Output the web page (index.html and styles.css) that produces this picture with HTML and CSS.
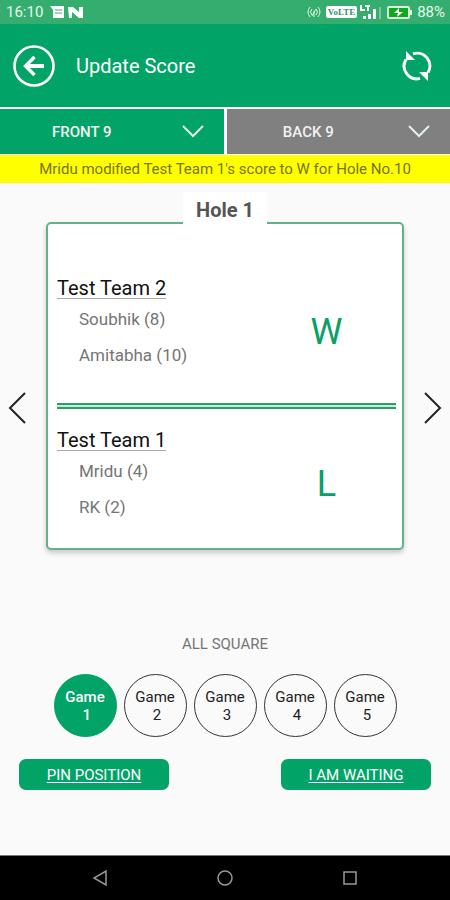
FILE: index.html
```html
<!DOCTYPE html>
<html lang="en">
<head>
<meta charset="utf-8">
<meta name="viewport" content="width=device-width, initial-scale=1">
<title>Update Score</title>
<link rel="stylesheet" href="styles.css">
</head>
<body>
<div class="status-bar">
  <span class="clock">16:10</span>
  <svg class="status-left" width="34" height="14" viewBox="0 0 34 14" aria-hidden="true">
    <path d="M0 1h14v12H3V5z" fill="#fff"/>
    <path d="M5 5h7M5 8h7" stroke="#35ad6f" stroke-width="1"/>
    <path d="M18 2h5l6 5V2h4v11h-4l-7-6v6h-3z" fill="#fff"/>
  </svg>
  <span class="spacer"></span>
  <svg width="14" height="12" viewBox="0 0 14 12" fill="none" stroke="#e0f5e8" aria-hidden="true">
    <path d="M3 1Q-1 6 3 11M5 3Q2 6 5 9M11 1q4 5 0 10M9 3q3 3 0 6"/>
    <path d="M7 5v6M5 10l4-7"/>
  </svg>
  <span class="volte">VoLTE</span>
  <svg width="22" height="15" viewBox="0 0 22 15" fill="#fff" aria-hidden="true">
    <path d="M0 0h2v4h3v2H0zM5 0h5v2H9v4H7V2H5zM3 11h3v3H3zM8 9h3v5H8zM13 4h3v10h-3z"/>
    <path d="M19 2h2v12h-2z" opacity=".35"/>
  </svg>
  <svg class="battery" width="25" height="14" viewBox="0 0 25 14" aria-hidden="true">
    <rect x="1" y="2" width="21" height="11" rx="1" fill="#10a91c" stroke="#d9f3df" stroke-width="2"/>
    <path d="M23 5h2v5h-2z" fill="#d9f3df"/>
    <path d="M12 3L7 8h4l-1 4 6-5h-4z" fill="#fff"/>
  </svg>
  <span class="percent">88%</span>
</div>

<header class="app-bar">
  <button class="icon-button" type="button" aria-label="Back">
    <svg width="42" height="42" viewBox="0 0 42 42" fill="none" stroke="#fff">
      <circle cx="21" cy="21" r="19.5" stroke-width="2.6"/>
      <path d="M31 21H13" stroke-width="4"/>
      <path d="M21.500 12L12.500 21l9 9" stroke-width="3.400"/>
    </svg>
  </button>
  <h1 class="title">Update Score</h1>
  <button class="icon-button" type="button" aria-label="Refresh">
    <svg width="30" height="30" viewBox="0 0 30 30" fill="none" stroke="#fff" stroke-width="3">
      <path d="M4 8.500A12.700 12.700 0 0 0 18 27.400M26 21.500A12.700 12.700 0 0 0 11 2.900"/>
      <path d="M4 0v9h9zM26 30v-9h-9z" fill="#fff" stroke="none"/>
    </svg>
  </button>
</header>

<nav class="tabs">
  <button class="tab active" type="button"><span>FRONT 9</span>
    <svg width="22" height="13" viewBox="0 0 22 13" aria-hidden="true"><path d="M1 1l10 10L21 1"/></svg>
  </button>
  <button class="tab" type="button"><span>BACK 9</span>
    <svg width="22" height="13" viewBox="0 0 22 13" aria-hidden="true"><path d="M1 1l10 10L21 1"/></svg>
  </button>
</nav>

<p class="notice">Mridu modified Test Team 1's score to W for Hole No.10</p>

<main class="content">
  <section class="hole">
    <button class="arrow" type="button" aria-label="Previous hole">
      <svg width="18" height="32" viewBox="0 0 18 32"><path d="M17 1L2 16l15 15"/></svg>
    </button>
    <div class="card">
      <h2 class="hole-name">Hole 1</h2>
      <div class="team">
        <div class="roster">
          <h3>Test Team 2</h3>
          <p>Soubhik (8)</p>
          <p>Amitabha (10)</p>
        </div>
        <div class="result">W</div>
      </div>
      <hr class="divider">
      <div class="team">
        <div class="roster">
          <h3>Test Team 1</h3>
          <p>Mridu (4)</p>
          <p>RK (2)</p>
        </div>
        <div class="result">L</div>
      </div>
    </div>
    <button class="arrow" type="button" aria-label="Next hole">
      <svg width="18" height="32" viewBox="0 0 18 32"><path d="M1 1l15 15L1 31"/></svg>
    </button>
  </section>

  <p class="standing">ALL SQUARE</p>

  <div class="games">
    <button class="game active" type="button">Game<br>&nbsp;1</button>
    <button class="game" type="button">Game<br>&nbsp;2</button>
    <button class="game" type="button">Game<br>&nbsp;3</button>
    <button class="game" type="button">Game<br>&nbsp;4</button>
    <button class="game" type="button">Game<br>&nbsp;5</button>
  </div>

  <div class="actions">
    <button class="action" type="button">PIN POSITION</button>
    <button class="action" type="button">I AM WAITING</button>
  </div>
</main>

<footer class="system-nav">
  <button type="button" aria-label="Back"><svg width="18" height="18" viewBox="0 0 18 18"><path d="M15 2v14L3 9z"/></svg></button>
  <button type="button" aria-label="Home"><svg width="18" height="18" viewBox="0 0 18 18"><circle cx="9" cy="9" r="7"/></svg></button>
  <button type="button" aria-label="Recent apps"><svg width="18" height="18" viewBox="0 0 18 18"><path d="M3 3h12v12H3z"/></svg></button>
</footer>
</body>
</html>
```
FILE: styles.css
```css
* {
  box-sizing: border-box;
}

body {
  margin: 0;
  min-height: 100vh;
  display: flex;
  flex-direction: column;
  background: #fafafa;
  color: #757575;
  font-family: Roboto, "Liberation Sans", sans-serif;
  font-size: 16px;
}

h1, h2, h3, p {
  margin: 0;
  font-weight: 400;
}

button {
  padding: 0;
  border: 0;
  background: none;
  color: inherit;
  font: inherit;
  cursor: pointer;
}

svg {
  display: block;
  flex: none;
}

.status-bar {
  display: flex;
  align-items: center;
  height: 24px;
  padding: 0 5px 0 6px;
  background: #35ad6f;
  color: #e6f7ed;
}

.clock {
  font-size: 15px;
}

.status-left {
  margin-left: 7px;
}

.spacer {
  flex: 1;
}

.volte {
  margin: 0 3px 0 5px;
  padding: 0 2px;
  border-radius: 2px;
  background: #fff;
  color: #35956a;
  font: bold 9px/12px "Liberation Serif", serif;
}

.battery {
  margin: 0 5px;
}

.percent {
  font-size: 15px;
}

.app-bar {
  display: flex;
  align-items: center;
  height: 83px;
  padding: 0 18px 0 13px;
  background: #02a367;
  color: #fff;
}

.title {
  flex: 1;
  margin-left: 21px;
  font-size: 20px;
}

.tabs {
  display: flex;
  gap: 3px;
  padding: 2px 0 1px;
  background: #fff;
}

.tab {
  flex: 1;
  display: flex;
  align-items: center;
  height: 45px;
  padding-right: 20px;
  background: #808080;
  color: #f2f2f2;
  font-size: 15px;
  font-weight: 500;
}

.tab.active {
  background: #02a367;
}

.tab span {
  flex: 1;
  padding-right: 18px;
}

.tab path {
  fill: none;
  stroke: #e3f0ea;
  stroke-width: 2;
}

.notice {
  background: #ff0;
  color: #757510;
  font-size: 15px;
  line-height: 28px;
  text-align: center;
}

.content {
  flex: 1;
  padding-top: 39px;
}

.hole {
  display: flex;
  align-items: center;
  padding: 0 8px;
}

.arrow {
  padding-top: 44px;
}

.arrow path {
  fill: none;
  stroke: #222;
  stroke-width: 2;
}

.card {
  position: relative;
  flex: 1;
  margin: 0 20px;
  padding: 51px 6px 23px 9px;
  border: 2px solid #62b18b;
  border-radius: 5px;
  background: #fff;
  box-shadow: 0 3px 5px rgba(0, 0, 0, 0.2);
}

.hole-name {
  position: absolute;
  top: -32px;
  left: 50%;
  transform: translateX(-50%);
  padding: 0 13px;
  background: #fff;
  color: #555;
  font-size: 20px;
  font-weight: 700;
  line-height: 36px;
  white-space: nowrap;
}

.team {
  display: grid;
  grid-template-columns: 59% 41%;
  align-items: center;
}

.roster h3 {
  color: #111;
  font-size: 20px;
  line-height: 26px;
  text-decoration: underline;
  text-decoration-color: #aaa;
  text-decoration-thickness: 1px;
  text-underline-offset: 3px;
}

.roster p {
  padding-left: 22px;
  font-size: 17px;
  line-height: 36px;
}

.result {
  padding-top: 16px;
  color: #0aa064;
  font-size: 36px;
  text-align: center;
}

.divider {
  height: 6px;
  margin: 30px 0 18px;
  border: solid #2aa067;
  border-width: 2px 0;
  background: #c8ecd8;
}

.standing {
  margin-top: 84px;
  font-size: 15px;
  line-height: 20px;
  text-align: center;
}

.games {
  display: flex;
  justify-content: center;
  gap: 7px;
  margin-top: 20px;
}

.game {
  width: 63px;
  height: 63px;
  border: 1px solid #333;
  border-radius: 50%;
  color: #222;
  font-size: 15px;
  line-height: 18px;
}

.game.active {
  border-color: #02a367;
  background: #02a367;
  color: #fff;
  font-weight: 500;
}

.actions {
  display: flex;
  justify-content: space-between;
  margin-top: 22px;
  padding: 0 19px;
}

.action {
  width: 150px;
  height: 31px;
  border-radius: 7px;
  background: #02a367;
  color: #fff;
  font-size: 15px;
  text-decoration: underline;
  text-underline-offset: 2px;
}

.system-nav {
  display: flex;
  justify-content: space-between;
  align-items: center;
  height: 45px;
  padding: 0 91px;
  border-top: 1px solid #777;
  background: #000;
}

.system-nav svg * {
  fill: none;
  stroke: #999;
  stroke-width: 1.5;
}
```
